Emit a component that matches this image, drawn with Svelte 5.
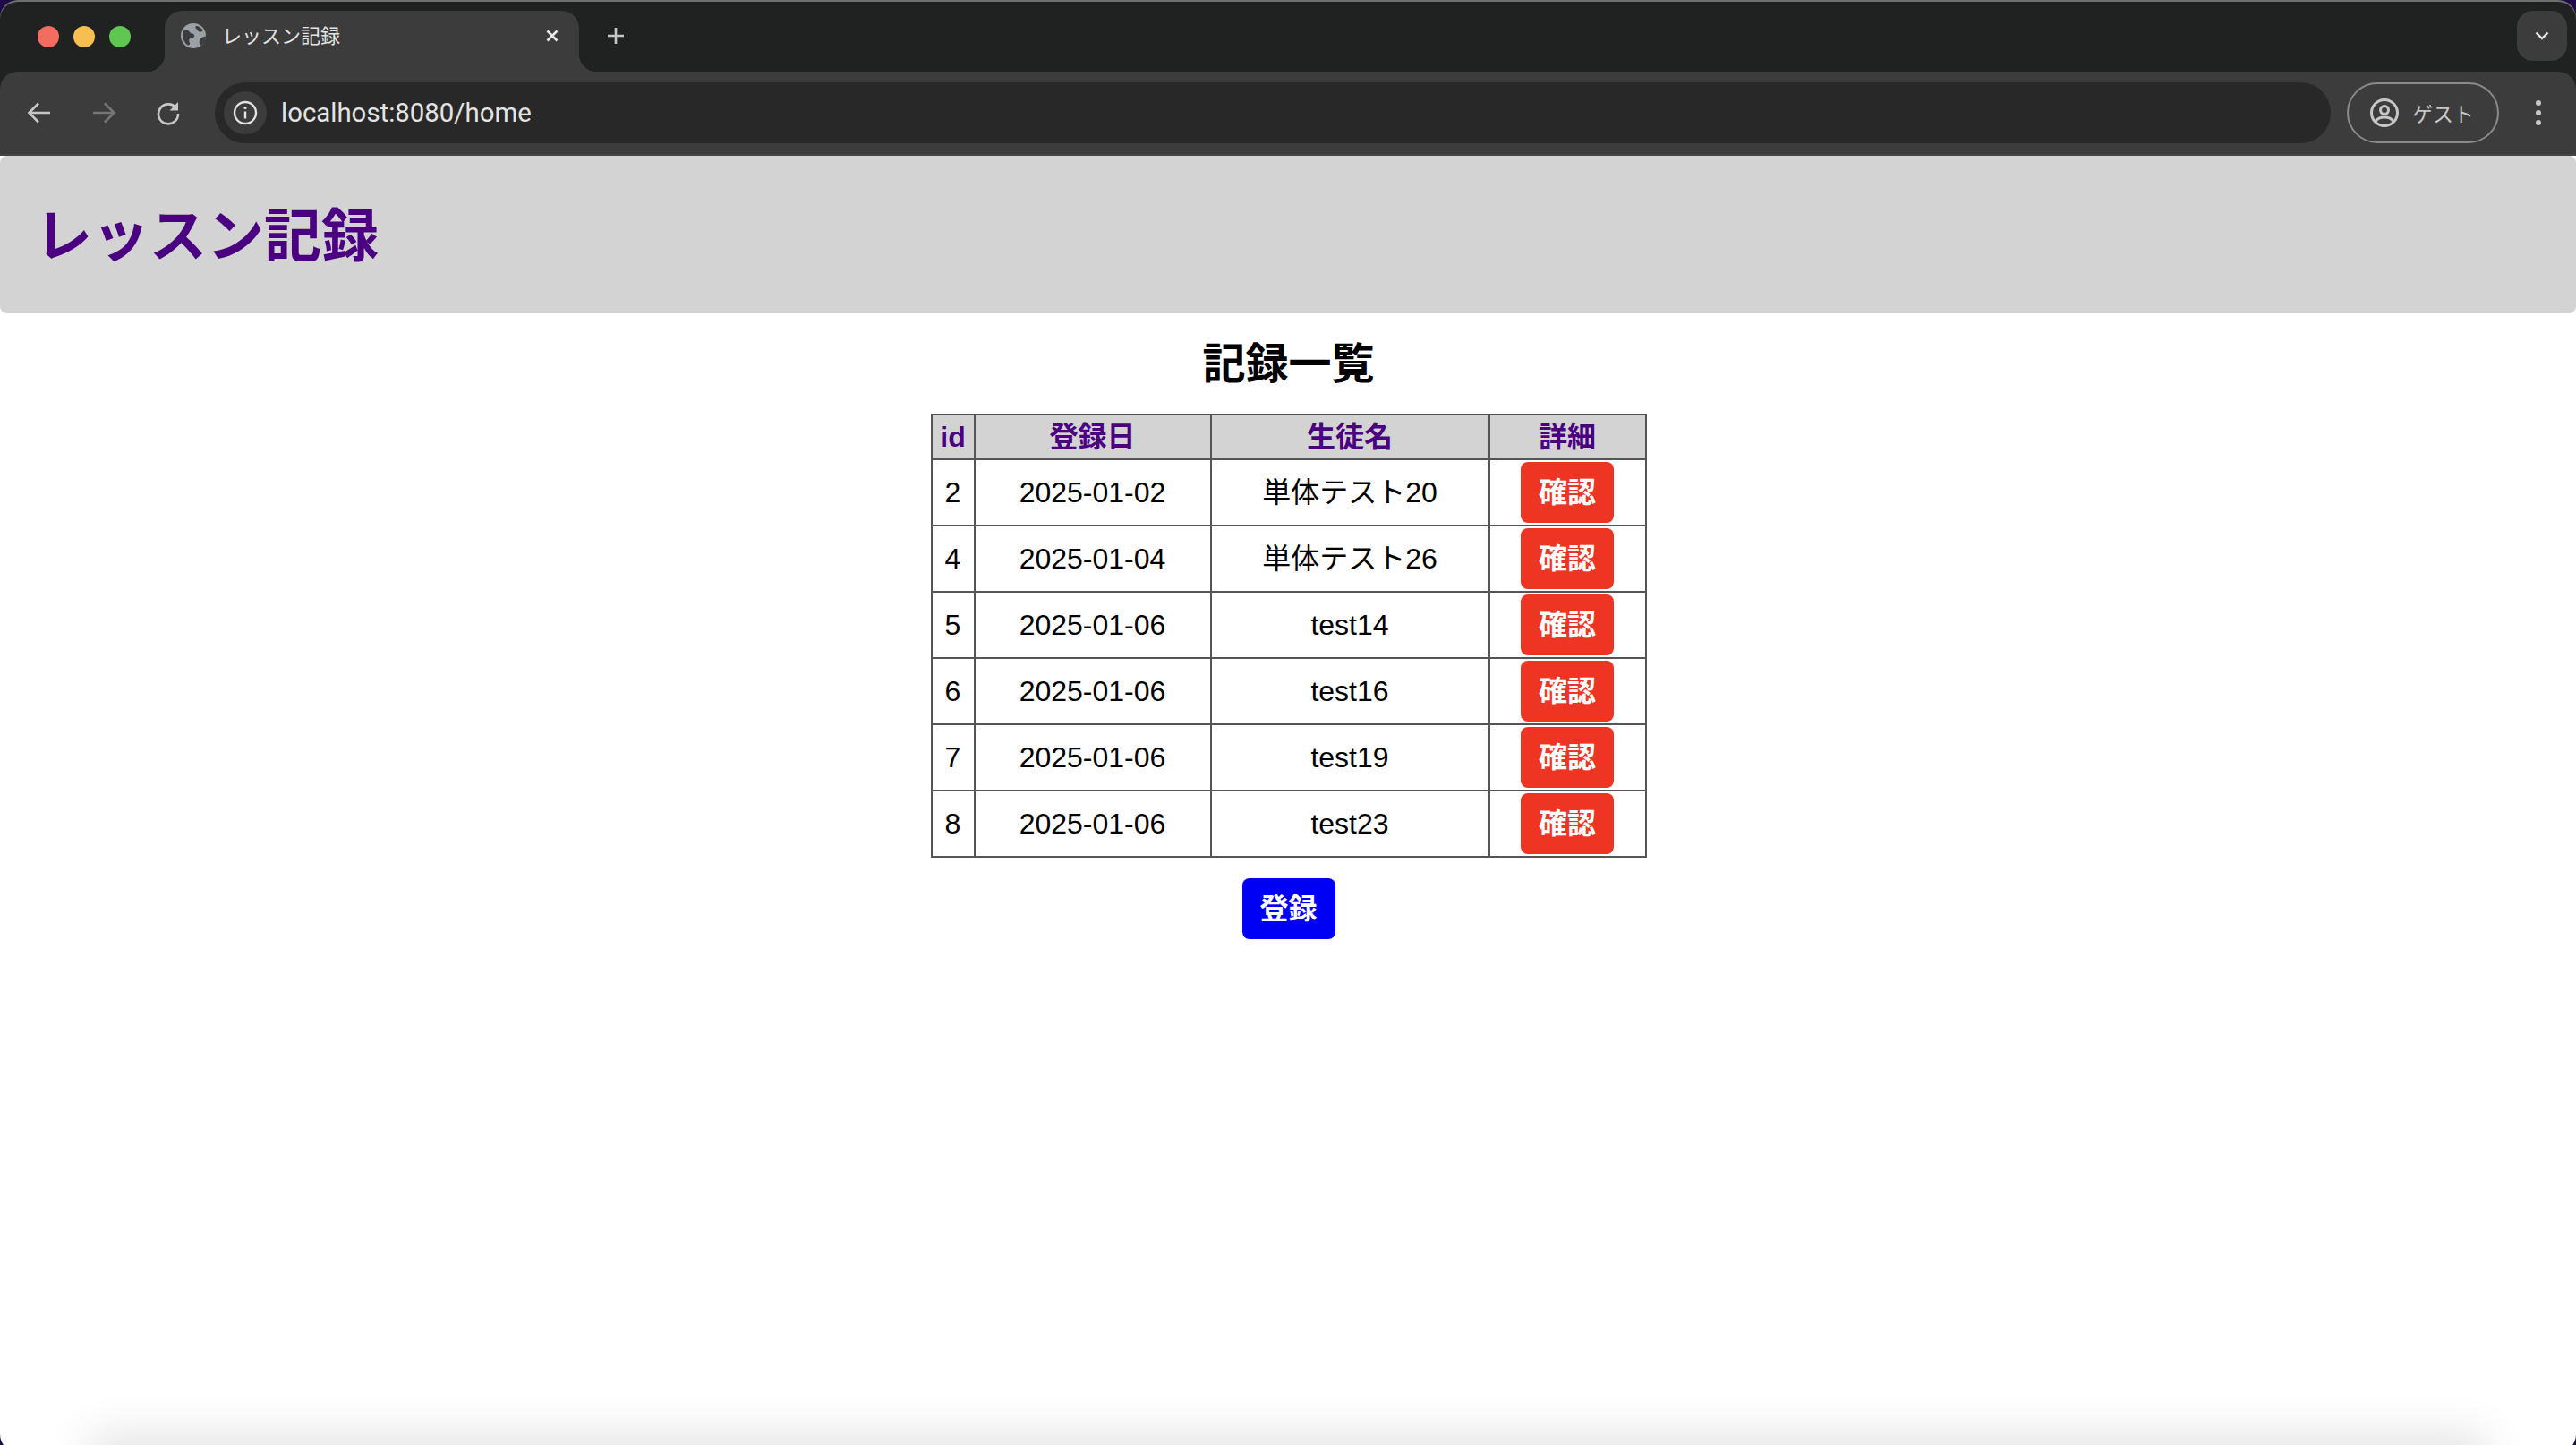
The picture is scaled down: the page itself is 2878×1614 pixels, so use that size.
<script>
	const rows = [
		{ id: 2, date: '2025-01-02', name: '単体テスト20' },
		{ id: 4, date: '2025-01-04', name: '単体テスト26' },
		{ id: 5, date: '2025-01-06', name: 'test14' },
		{ id: 6, date: '2025-01-06', name: 'test16' },
		{ id: 7, date: '2025-01-06', name: 'test19' },
		{ id: 8, date: '2025-01-06', name: 'test23' }
	];
</script>

<div class="desktop">
	<div class="window">
		<div class="tabstrip">
			<div class="lights">
				<span class="light red"></span>
				<span class="light yellow"></span>
				<span class="light green"></span>
			</div>
			<div class="tab">
				<svg class="favicon" viewBox="0 0 28 28">
					<circle cx="14" cy="14" r="14" fill="#9aa0a6" />
					<path d="M3 8c4-1 6 0 7 2s4 1 5 3-2 4-4 4-2 3-1 5-2 3-3 2C3 21 1 14 3 8z" fill="#3c3c3c" />
					<path d="M17 3c3 0 6 2 8 5-2 2-5 2-6 0s-4-3-2-5zM28 15c0 4-2 7-5 10-2-1-3-4-2-6s5-5 7-4z" fill="#3c3c3c" />
				</svg>
				<span class="tab-title">レッスン記録</span>
				<svg class="tab-close" viewBox="0 0 16 16">
					<path d="M2.5 2.5l11 11M13.5 2.5l-11 11" />
				</svg>
			</div>
			<svg class="new-tab" viewBox="0 0 20 20">
				<path d="M10 1v18M1 10h18" />
			</svg>
			<div class="tab-search">
				<svg viewBox="0 0 16 10">
					<path d="M1.5 1.5L8 8l6.5-6.5" />
				</svg>
			</div>
		</div>

		<div class="toolbar">
			<svg class="nav" viewBox="0 0 28 28">
				<path d="M26 14H3M13 3.5L2.5 14 13 24.5" />
			</svg>
			<svg class="nav disabled" viewBox="0 0 28 28">
				<path d="M2 14h23M15 3.5L25.5 14 15 24.5" />
			</svg>
			<svg class="nav" viewBox="0 0 28 28">
				<path d="M23 9A11 11 0 1 0 25 15" />
				<path class="solid" d="M25 2v9.500h-9.500z" />
			</svg>
			<div class="omnibox">
				<span class="info">
					<svg viewBox="0 0 28 28">
						<circle cx="14" cy="14" r="12" />
						<path d="M14 12.500v8" />
						<circle class="solid" cx="14" cy="8.500" r="1.600" />
					</svg>
				</span>
				<span class="url">localhost:8080/home</span>
			</div>
			<div class="profile">
				<svg viewBox="0 0 32 32">
					<circle cx="16" cy="16" r="14.500" />
					<circle cx="16" cy="13" r="4.500" />
					<path d="M6 26c2-4 6-5 10-5s8 1 10 5" />
				</svg>
				<span>ゲスト</span>
			</div>
			<div class="menu">
				<span></span>
				<span></span>
				<span></span>
			</div>
		</div>

		<div class="page">
			<header class="site-header">
				<h1>レッスン記録</h1>
			</header>
			<main>
				<h2>記録一覧</h2>
				<table>
					<thead>
						<tr>
							<th class="col-id">id</th>
							<th class="col-date">登録日</th>
							<th class="col-name">生徒名</th>
							<th class="col-detail">詳細</th>
						</tr>
					</thead>
					<tbody>
						{#each rows as row}
							<tr>
								<td>{row.id}</td>
								<td>{row.date}</td>
								<td>{row.name}</td>
								<td><button class="confirm">確認</button></td>
							</tr>
						{/each}
					</tbody>
				</table>
				<button class="register">登録</button>
			</main>
			<div class="bottom-shadow"></div>
		</div>
	</div>
</div>

<style>
	:global(body) {
		margin: 0;
	}

	.desktop {
		height: 1614px;
		background: #1c0a4a;
		overflow: hidden;
	}

	.window {
		height: 1622px;
		display: flex;
		flex-direction: column;
		border-radius: 20px;
		overflow: hidden;
		background: #202221;
		box-shadow: inset 0 2px 0 #6d6e6e;
		font-family: "Liberation Sans", "Noto Sans CJK JP", sans-serif;
	}

	.tabstrip {
		height: 80px;
		flex: none;
		display: flex;
		align-items: flex-start;
		box-sizing: border-box;
		padding: 12px 10px 0 0;
	}

	.lights {
		width: 184px;
		height: 58px;
		flex: none;
		box-sizing: border-box;
		padding-left: 42px;
		display: flex;
		gap: 16px;
		align-items: center;
	}

	.light {
		width: 24px;
		height: 24px;
		border-radius: 50%;
	}

	.red { background: #f26d60; }
	.yellow { background: #f6bf4f; }
	.green { background: #5fc651; }

	.tab {
		position: relative;
		width: 463px;
		height: 68px;
		flex: none;
		box-sizing: border-box;
		padding: 0 22px 12px 18px;
		display: flex;
		align-items: center;
		background: #3c3c3c;
		border-radius: 20px 20px 0 0;
	}

	.tab::before,
	.tab::after {
		content: '';
		position: absolute;
		bottom: 0;
		width: 20px;
		height: 20px;
	}

	.tab::before {
		left: -20px;
		background: radial-gradient(circle at 0 0, transparent 20px, #3c3c3c 20.5px);
	}

	.tab::after {
		right: -20px;
		background: radial-gradient(circle at 100% 0, transparent 20px, #3c3c3c 20.5px);
	}

	.favicon {
		width: 28px;
		height: 28px;
		flex: none;
	}

	.tab-title {
		margin-left: 18px;
		margin-bottom: 4px;
		font-family: "Noto Sans CJK JP", sans-serif;
		font-size: 22px;
		color: #e3e3e3;
		flex: 1;
	}

	.tab-close {
		width: 16px;
		height: 16px;
		fill: none;
		stroke: #e8e8e8;
		stroke-width: 2.6;
	}

	.new-tab {
		width: 20px;
		height: 20px;
		margin: 18px 0 0 31px;
		fill: none;
		stroke: #c7c7c7;
		stroke-width: 2.600;
	}

	.tab-search {
		width: 56px;
		height: 56px;
		margin-left: auto;
		border-radius: 18px;
		background: #3c3c3c;
		display: flex;
		align-items: center;
		justify-content: center;
	}

	.tab-search svg {
		width: 16px;
		height: 10px;
		fill: none;
		stroke: #e8e8e8;
		stroke-width: 2.4;
	}

	.toolbar {
		height: 94px;
		flex: none;
		box-sizing: border-box;
		padding: 0 36px 0 30px;
		display: flex;
		align-items: center;
		background: #3c3c3c;
		border-radius: 20px 20px 0 0;
		border-bottom: 2px solid #444;
	}

	.nav {
		width: 28px;
		height: 28px;
		flex: none;
		margin-right: 44px;
		fill: none;
		stroke: #c7c7c7;
		stroke-width: 2.6;
	}

	.nav.disabled {
		stroke: #757575;
	}

	.nav .solid {
		fill: #c7c7c7;
		stroke: none;
	}

	.nav:nth-of-type(3) {
		margin-right: 38px;
	}

	.omnibox {
		flex: 1;
		height: 68px;
		box-sizing: border-box;
		padding-left: 10px;
		display: flex;
		align-items: center;
		border-radius: 34px;
		background: #282828;
	}

	.info {
		width: 48px;
		height: 48px;
		border-radius: 50%;
		background: #3c3c3c;
		display: flex;
		align-items: center;
		justify-content: center;
	}

	.info svg {
		width: 28px;
		height: 28px;
		fill: none;
		stroke: #e3e3e3;
		stroke-width: 2.4;
	}

	.info .solid {
		fill: #e3e3e3;
		stroke: none;
	}

	.url {
		margin-left: 16px;
		font-family: Roboto, sans-serif;
		font-size: 29.4px;
		color: #e3e3e3;
	}

	.profile {
		width: 170px;
		height: 68px;
		margin-left: 18px;
		flex: none;
		box-sizing: border-box;
		padding-left: 24px;
		display: flex;
		align-items: center;
		gap: 15px;
		border: 2px solid #8a8a8a;
		border-radius: 34px;
		color: #c7c7c7;
		font-family: "Noto Sans CJK JP", sans-serif;
		font-size: 23px;
	}

	.profile svg {
		width: 32px;
		height: 32px;
		fill: none;
		stroke: #c7c7c7;
		stroke-width: 3;
	}

	.menu {
		width: 12px;
		margin-left: 38px;
		flex: none;
		display: flex;
		flex-direction: column;
		align-items: center;
		gap: 5px;
	}

	.menu span {
		width: 6px;
		height: 6px;
		border-radius: 50%;
		background: #c7c7c7;
	}

	.page {
		position: relative;
		flex: 1;
		background: #fff;
		overflow: hidden;
	}

	.site-header {
		height: 176px;
		box-sizing: border-box;
		padding: 0 0 9px 39px;
		display: flex;
		align-items: center;
		background: #d3d3d3;
		border-radius: 8px;
	}

	h1 {
		margin: 0;
		font-size: 64px;
		font-weight: 700;
		color: #4b0082;
	}

	main {
		box-sizing: border-box;
		padding-left: 1px;
		display: flex;
		flex-direction: column;
		align-items: center;
	}

	h2 {
		margin: 30px 0 28px;
		height: 54px;
		line-height: 54px;
		font-size: 48px;
		font-weight: 700;
		color: #000;
	}

	table {
		border-collapse: collapse;
		table-layout: fixed;
		width: 798px;
		color: #000;
		font-size: 32px;
	}

	th,
	td {
		border: 2px solid #555;
		padding: 0;
		text-align: center;
	}

	th {
		height: 48px;
		background: #d3d3d3;
		color: #4b0082;
		font-weight: 700;
		line-height: 36px;
	}

	td {
		height: 72px;
		line-height: 36px;
	}

	.col-id { width: 46px; }
	.col-date { width: 262px; }
	.col-name { width: 309px; }
	.col-detail { width: 173px; }

	button {
		display: block;
		width: 104px;
		height: 68px;
		padding: 0 0 6px;
		border: none;
		border-radius: 8px;
		color: #fff;
		font-family: inherit;
		font-size: 32px;
		font-weight: 700;
	}

	.confirm {
		margin: 0 auto;
		background: #ee3524;
	}

	.register {
		margin-top: 23px;
		background: #0000f5;
	}

	.bottom-shadow {
		position: absolute;
		left: 110px;
		right: 110px;
		bottom: -32px;
		height: 40px;
		box-shadow: 0 0 50px 10px rgba(0, 0, 0, 0.12);
	}
</style>
